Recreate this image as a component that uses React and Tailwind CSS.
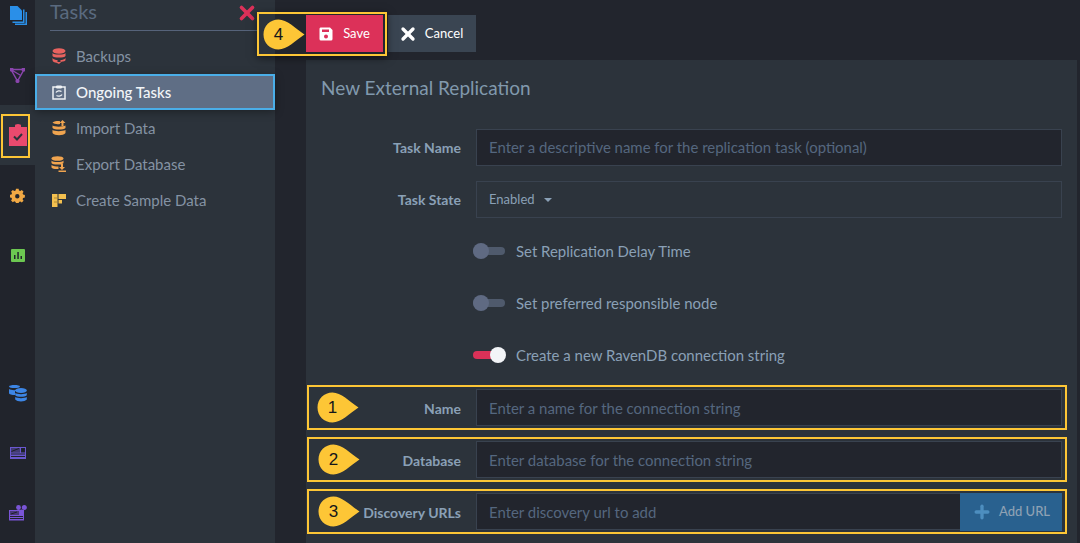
import React from "react";
import { X, Plus } from "lucide-react";

function Pin({ n }) {
  return (
    <span className="relative flex h-[31px] w-[42px] items-center justify-center">
      <svg width="42" height="31" viewBox="0 0 42 31" className="absolute inset-0">
        <path d="M15.5 0.5C24 0.5 32 9 41.5 15.5C32 22 24 30.5 15.5 30.5C7 30.5 0.5 24 0.5 15.5C0.5 7 7 0.5 15.5 0.5Z" fill="#fdc636" />
      </svg>
      <span className="relative mr-[11px] font-['Liberation_Sans',sans-serif] text-[17px] leading-none text-[#14161a]">{n}</span>
    </span>
  );
}

const menu = [
  {
    label: "Backups",
    icon: (
      <svg width="14" height="16" viewBox="0 0 14 16">
        <ellipse cx="7" cy="3" rx="6.500" ry="2.800" fill="#e8625f" />
        <path d="M0.500 5c1 2 12 2 13 0v3c-1 2-12 2-13 0ZM0.500 10c1 1.500 3 2 5 2v2h3v-2c2 0 4-.5 5-2v2c0 1-2 1.500-4 1.700L7 16l-2.500-1.300C2.500 14.500 0.500 14 0.500 12Z" fill="#e8625f" />
      </svg>
    ),
  },
  {
    label: "Ongoing Tasks",
    active: true,
    icon: (
      <svg width="14" height="16" viewBox="0 0 14 16" fill="none" stroke="#eef1f4">
        <path d="M1 3h12v12H1Z" strokeWidth="1.500" />
        <path d="M4.500 2h5v2h-5Z" fill="#eef1f4" strokeWidth="1" />
        <path d="M4 8.500c1-2 4-2 5.500-1M10 10.500c-1 2-4 2-5.500 1" strokeWidth="1.300" />
      </svg>
    ),
  },
  {
    label: "Import Data",
    icon: (
      <svg width="14" height="16" viewBox="0 0 14 16">
        <path d="M0.500 2.500C3 1 6 1 8 1.200V4C5 4.500 2 4 .5 2.500ZM10.500 0l3 3h-2v3h-2V3h-2ZM0.500 5.500c2 1.500 10 1.500 13 0v2.500c-2 2-11 2-13 0ZM0.500 10c2 1.500 10 1.500 13 0v3c-2 3-11 3-13 0Z" fill="#f0a44f" />
      </svg>
    ),
  },
  {
    label: "Export Database",
    icon: (
      <svg width="15" height="16" viewBox="0 0 15 16">
        <ellipse cx="6.500" cy="2.500" rx="6" ry="2.300" fill="#f0a44f" />
        <path d="M0.500 4.500c1 2 11 2 12 0V7c-1 2-11 2-12 0ZM0.500 9c1.500 1.500 5 1.500 7 1.500V13c-3 .3-6 0-7-1.500ZM10 8h2v3h2l-3 3-3-3h2ZM7.500 14.500H15V16H7.500Z" fill="#f0a44f" />
      </svg>
    ),
  },
  {
    label: "Create Sample Data",
    icon: (
      <svg width="14" height="13" viewBox="0 0 14 13">
        <path d="M0 0h5.500v13H0ZM6.500 0H14v5H6.500ZM6.500 6H10v3.500H6.500Z" fill="#f3c04f" />
        <path d="M2 4h3.500M2 8h3.500" stroke="#b08a35" />
      </svg>
    ),
  },
];

function Field({ label, placeholder, first }) {
  return (
    <div className="flex h-[37px] items-center">
      <label className={first ? "w-[140px] text-right text-[14px] font-bold text-[#8aa0b6]" : "w-[140px] pt-px text-right text-[14px] font-bold text-[#8aa0b6]"}>{label}</label>
      <div className={first ? "ml-[15px] flex h-full flex-1 items-center border border-[#39424f] bg-[#22252d] px-3 text-[14.950px] text-[#55677f]" : "ml-[15px] flex h-full flex-1 items-center border border-[#39424f] bg-[#22252d] px-3 pt-px text-[14.950px] text-[#55677f]"}>
        {placeholder}
      </div>
    </div>
  );
}

function Toggle({ label, on }) {
  return (
    <div className="flex h-[36px] items-center pl-[152px]">
      <span className="relative block h-[8px] w-[32px] rounded-full">
        <span className={on ? "absolute inset-0 rounded-full bg-[#da3158]" : "absolute inset-0 rounded-full bg-[#4f5a6c]"} />
        <span
          className={
            on
              ? "absolute right-[-1px] top-[-4px] h-[16px] w-[16px] rounded-full bg-[#f2f4f7]"
              : "absolute left-0 top-[-4px] h-[16px] w-[16px] rounded-full bg-[#5f6a82]"
          }
        />
      </span>
      <span className="ml-[11px] text-[14.950px] text-[#8aa0b6]">{label}</span>
    </div>
  );
}

export default function App() {
  return (
    <div className="relative flex h-[543px] w-[1080px] overflow-hidden bg-[#22252d] font-['Lato','Liberation_Sans',sans-serif]">
      {/* icon rail */}
      <aside className="flex w-[35px] shrink-0 flex-col items-center bg-[#21242c]">
        <div className="flex h-[45px] w-full items-center justify-center pb-[15px] pl-[1px]">
          <svg width="17" height="19" viewBox="0 0 17 19">
            <path d="M0 0h7.500l4.500 4.500V14H0Z" fill="#2a8fe8" />
            <path d="M13 3.500V15.500H2.500V17H14.500V3.500ZM15.500 6V17.500H5V19H17V6Z" fill="#2a8fe8" />
          </svg>
        </div>
        <div className="flex h-[60px] w-full items-center justify-center">
          <svg width="15" height="15" viewBox="0 0 15 15" fill="none" stroke="#8a45ad" strokeWidth="1.400">
            <path d="M1 1.500H14L7.500 13ZM1.500 2L10 7" />
            <circle cx="1.500" cy="1.500" r="1.400" fill="#8a45ad" />
            <circle cx="13.500" cy="1.500" r="1.400" fill="#8a45ad" />
            <circle cx="7.500" cy="13" r="1.400" fill="#8a45ad" />
          </svg>
        </div>
        <div className="flex h-[60px] w-full items-center justify-center bg-[#2c333b]">
          <svg width="18" height="22" viewBox="0 0 18 22">
            <path d="M0 3h6V1.500a3 1.500 0 0 1 6 0V3h6v19H0Z" fill="#ea4a6e" />
            <path d="M5 12.500l3 3 5-5.500" fill="none" stroke="#2c333b" strokeWidth="2" />
          </svg>
        </div>
        <div className="flex h-[60px] w-full items-center justify-center">
          <svg width="15" height="15" viewBox="0 0 15 15">
            <path fillRule="evenodd" d="M6 0h3l.4 2 1.500.6 1.700-1.100 2 2-1.100 1.700.6 1.500 2 .4v3l-2 .4-.6 1.500 1.100 1.700-2 2-1.700-1.100-1.500.6L9 17H6l-.4-2-1.500-.6-1.700 1.100-2-2 1.100-1.700L.9 10.300l-2-.4v-3l2-.4.6-1.500L.4 3.500l2-2 1.700 1.100 1.500-.6ZM7.500 6a2.500 2.500 0 1 0 0 5 2.500 2.500 0 0 0 0-5Z" transform="translate(0.700 0.700) scale(0.880)" fill="#f0a844" />
          </svg>
        </div>
        <div className="flex h-[60px] w-full items-center justify-center">
          <svg width="14" height="13" viewBox="0 0 14 13">
            <path fillRule="evenodd" d="M1 0h12a1 1 0 0 1 1 1v11a1 1 0 0 1-1 1H1a1 1 0 0 1-1-1V1a1 1 0 0 1 1-1ZM3 6v4h1.500V6ZM6.300 3v7h1.500V3ZM9.500 7v3H11V7Z" fill="#6cc751" />
          </svg>
        </div>
        <div className="mt-[78px] flex h-[60px] w-full items-center justify-center">
          <svg width="18" height="18" viewBox="0 0 18 18" fill="#3d86e6">
            <path d="M0 2.500C0 .5 11 .5 11 2.500S0 4.500 0 2.500ZM0 5c2 1.500 8 1.500 11 0v2H6v4c-3 0-6-.5-6-2Z" />
            <ellipse cx="12" cy="6.500" rx="5.800" ry="2.500" />
            <path d="M6.200 9c2 1.500 9.600 1.500 11.600 0v2.300c-2 2-9.600 2-11.600 0ZM6.200 13c2 1.500 9.600 1.500 11.600 0v2.500c-2 2.500-9.600 2.500-11.600 0Z" />
          </svg>
        </div>
        <div className="flex h-[60px] w-full items-center justify-center">
          <svg width="16" height="12" viewBox="0 0 16 12">
            <path fillRule="evenodd" d="M0 0h16v12H0ZM1 1v4.500h9V1ZM11 1v4.500h4V1ZM1 6.500v1h14v-1ZM1 9v1h14V9Z" fill="#6a58cf" />
            <path d="M1 1h9v4.500H1Z" fill="#6a58cf" fillOpacity="0.450" />
            <path d="M1.500 4.500L5 3l4-1.500M12 3h2M13 1.500v3" stroke="#1f2129" strokeWidth="1" />
          </svg>
        </div>
        <div className="flex h-[60px] w-full items-center justify-center">
          <svg width="18" height="16" viewBox="0 0 18 16">
            <path fillRule="evenodd" d="M0 5h15v10.500H0ZM1 6v4h9V6ZM1 11v1h13v-1ZM1 13v1h13v-1Z" fill="#7a55d6" />
            <path d="M1 6h9v4H1Z" fill="#7a55d6" fillOpacity="0.450" />
            <circle cx="9.500" cy="2.500" r="2.400" fill="#7a55d6" />
            <circle cx="15.300" cy="2.500" r="2.500" fill="#7a55d6" />
            <circle cx="12.500" cy="7" r="2.500" fill="#7a55d6" />
            <path d="M2 9L8 7" stroke="#1f2129" />
          </svg>
        </div>
      </aside>

      {/* tasks menu */}
      <nav className="w-[241px] shrink-0 border-r border-[#22252d] bg-[#2c333b]">
        <div className="ml-[15px] mr-[17px] flex h-[31px] items-start justify-between border-b border-[#56637a]">
          <span className="-mt-[2px] text-[20px] leading-[26px] text-[#5a6a7f]">Tasks</span>
          <X className="mt-[2px] text-[#dc3159]" size={22} strokeWidth={4} />
        </div>
        <ul className="mt-[7px]">
          {menu.map((item) => (
            <li
              key={item.label}
              className={
                item.active
                  ? "flex h-[36px] items-center bg-[#5f6e85] pl-[16px] shadow-[0_2px_8px_rgba(0,0,0,0.35)]"
                  : "flex h-[36px] items-center pl-[16px] text-[#8492a3]"
              }
            >
              <span className="flex w-[15px] justify-center">{item.icon}</span>
              <span className={item.active ? "ml-[10px] text-[15px] font-medium text-[#f2f5f8]" : "ml-[10px] text-[15px]"}>{item.label}</span>
            </li>
          ))}
        </ul>
      </nav>

      {/* main column */}
      <main className="flex-1 pl-[30px] pr-[3px]">
        <div className="flex h-[60px] items-start gap-[5px] pt-[15px]">
          <button className="flex h-[37px] w-[77px] items-center justify-center gap-[10px] bg-[#dc3159] text-[13px] text-white">
            <svg width="14" height="14" viewBox="0 0 14 14">
              <path fillRule="evenodd" d="M1.500 0.500H11L13.500 3V12a1.500 1.500 0 0 1-1.500 1.500H2A1.500 1.500 0 0 1 .5 12V2A1.500 1.500 0 0 1 1.500 .5ZM3 2.500V5h7V2.500ZM7 7.500a2 2 0 1 0 0 4 2 2 0 0 0 0-4Z" fill="white" />
            </svg>
            Save
          </button>
          <button className="flex h-[37px] w-[88px] items-center justify-center gap-[7px] bg-[#3a4552] pr-[3px] text-[13px] text-white">
            <X size={20} strokeWidth={4} />
            Cancel
          </button>
        </div>
        <section className="h-[483px] bg-[#2c333b] px-[15px]">
          <h1 className="pt-[14px] text-[19px] leading-[28px] text-[#8199ad]">New External Replication</h1>
          <div className="mt-[27px]">
            <Field first label="Task Name" placeholder="Enter a descriptive name for the replication task (optional)" />
            <div className="mt-[15px] flex h-[37px] items-center">
              <label className="w-[140px] text-right text-[14px] font-bold text-[#8aa0b6]">Task State</label>
              <div className="ml-[15px] flex h-full flex-1 items-center gap-[9px] border border-[#39424f] px-3 text-[13px] text-[#8aa0b6]">
                Enabled
                <span className="h-0 w-0 border-x-[4px] border-t-[4px] border-x-transparent border-t-[#8aa0b6]" />
              </div>
            </div>
            <div className="mt-[15px] space-y-[16px]">
              <Toggle label="Set Replication Delay Time" />
              <Toggle label="Set preferred responsible node" />
              <Toggle label="Create a new RavenDB connection string" on />
            </div>
            <div className="mt-[16px]">
              <Field label="Name" placeholder="Enter a name for the connection string" />
            </div>
            <div className="mt-[15px]">
              <Field label="Database" placeholder="Enter database for the connection string" />
            </div>
            <div className="mt-[15px] flex h-[37px] items-center">
              <label className="w-[140px] pt-px text-right text-[14px] font-bold text-[#8aa0b6]">Discovery URLs</label>
              <div className="ml-[15px] flex h-full flex-1 items-center border border-[#39424f] bg-[#22252d] px-3 pt-px text-[14.950px] text-[#55677f]">
                Enter discovery url to add
              </div>
              <button className="-ml-px flex h-[38px] w-[102px] items-center justify-center gap-[7px] bg-[#29618f] text-[13px] font-medium text-[#8fa2b4]">
                <Plus size={20} strokeWidth={4} className="text-[#4d8ebf]" />
                Add URL
              </button>
            </div>
          </div>
        </section>
      </main>

      {/* annotations drawn over the page */}
      <div className="absolute left-[1px] top-[114px] h-[44px] w-[29px] border-2 border-[#fdc636]" />
      <div className="absolute left-[35px] top-[74px] h-[36px] w-[240px] border-2 border-[#4aaee8]" />
      <div className="absolute left-[257px] top-[12px] flex h-[44px] w-[130px] items-center border-2 border-[#fdc636] pl-[4px] shadow-[0_2px_8px_rgba(0,0,0,0.5)]">
        <Pin n="4" />
      </div>
      <div className="absolute left-[307px] top-[385px] flex h-[45px] w-[760px] items-center border-2 border-[#fdc636] pl-[8px]">
        <Pin n="1" />
      </div>
      <div className="absolute left-[307px] top-[437px] flex h-[45px] w-[760px] items-center border-2 border-[#fdc636] pl-[9px]">
        <Pin n="2" />
      </div>
      <div className="absolute left-[307px] top-[489px] flex h-[45px] w-[760px] items-center border-2 border-[#fdc636] pl-[9px]">
        <Pin n="3" />
      </div>
    </div>
  );
}
